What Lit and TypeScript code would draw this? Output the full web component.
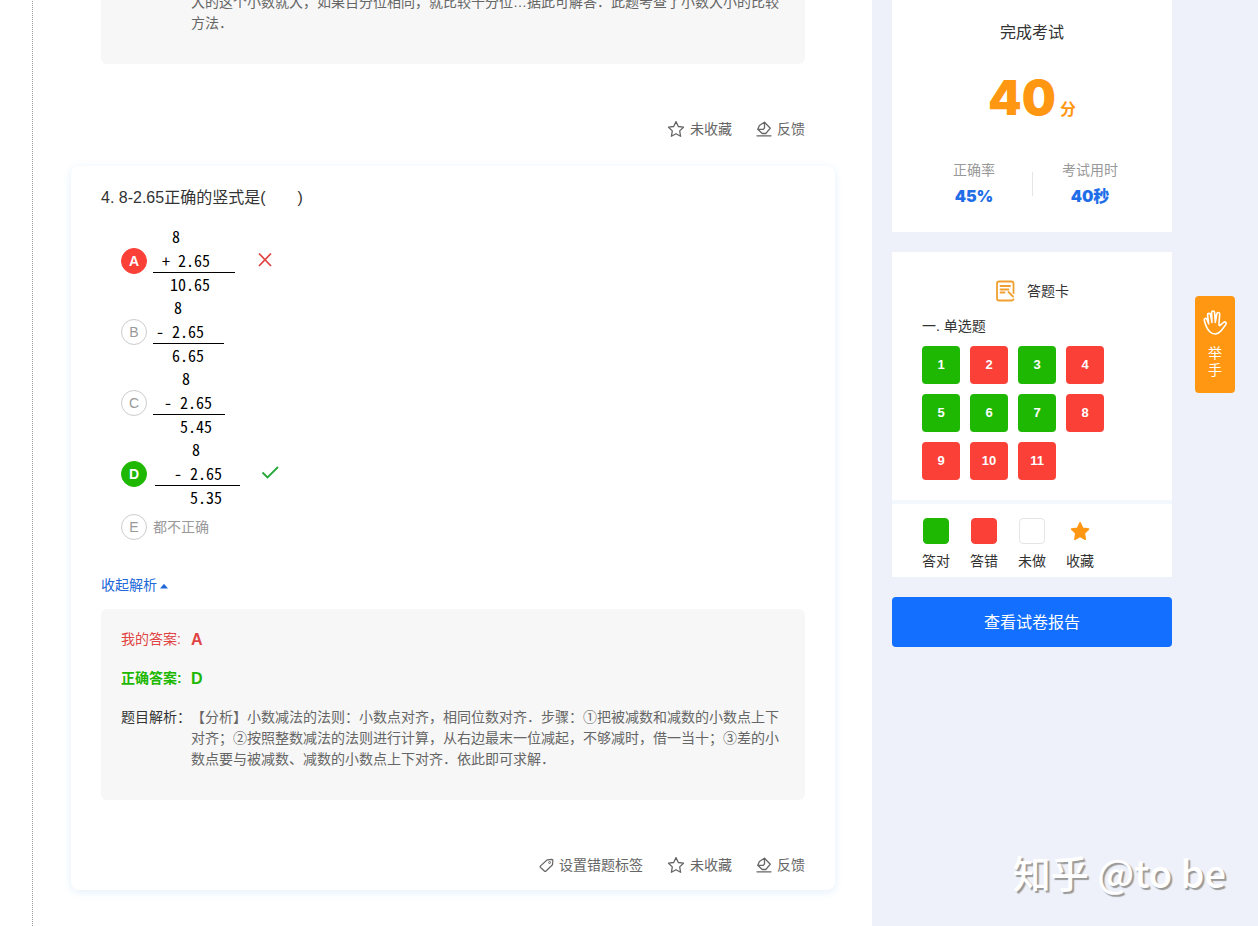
import { LitElement, html, css, svg, nothing } from "lit";
import { customElement, property, state } from "lit/decorators.js";
import { classMap } from "lit/directives/class-map.js";
import { styleMap } from "lit/directives/style-map.js";

interface Sum {
  lead: number;
  width: number;
  topRight: number;
  right: number;
  top: string;
  middle: string;
  result: string;
}

interface Option {
  key: string;
  state?: "wrong" | "right";
  sum?: Sum;
  text?: string;
}

const OPTIONS: Option[] = [
  { key: "A", state: "wrong", sum: { lead: 0, width: 82, topRight: 55, right: 25, top: "8", middle: "+ 2.65", result: "10.65" } },
  { key: "B", sum: { lead: 0, width: 71, topRight: 42, right: 20, top: "8", middle: "- 2.65", result: "6.65" } },
  { key: "C", sum: { lead: 0, width: 72, topRight: 35, right: 13, top: "8", middle: "- 2.65", result: "5.45" } },
  { key: "D", state: "right", sum: { lead: 2, width: 85, topRight: 40, right: 18, top: "8", middle: "- 2.65", result: "5.35" } },
  { key: "E", text: "都不正确" },
];

const RESULTS = [true, false, true, false, true, true, true, false, false, false, false];

const STAR = "M9 1.6l2.3 4.9 5.2.7-3.8 3.7.9 5.4L9 13.7l-4.6 2.6.9-5.4L1.5 7.2l5.2-.7z";

const starIcon = html`<svg class="icon" viewBox="0 0 18 18" width="18" height="18" aria-hidden="true">
  ${svg`<path d=${STAR} fill="none" stroke="currentColor" stroke-width="1.3" stroke-linejoin="round"/>`}
</svg>`;

const feedbackIcon = html`<svg class="icon" viewBox="0 0 16 16" width="16" height="16" aria-hidden="true">
  <g fill="none" stroke="currentColor" stroke-width="1.3" stroke-linejoin="round" stroke-linecap="round">
    <path d="M8.500 1.200l5.800 6-4.500 5.300H6.200L1.800 8.300l1.600-3.800z" />
    <path d="M8.500 1.400V6.800L7.300 8.300l-5.300 0" />
    <path d="M1 14.800h14" />
  </g>
</svg>`;

const tagIcon = html`<svg class="icon" viewBox="0 0 15 15" width="15" height="15" aria-hidden="true">
  <path d="M8.300 1.800l4.600-.4q1 0 1 1l-.4 4.300-6.700 6.500q-.6.500-1.200 0L1.300 9.300q-.5-.6 0-1.200z" fill="none" stroke="currentColor" stroke-width="1.200" stroke-linejoin="round" />
  <circle cx="10.600" cy="4.500" r="1" fill="none" stroke="currentColor" />
</svg>`;

const FONT = css`"Liberation Sans", Arial, "Noto Sans CJK SC", sans-serif`;

@customElement("question-actions")
class QuestionActions extends LitElement {
  @property({ type: Boolean }) tag = false;

  static styles = css`
    :host {
      display: flex;
      justify-content: flex-end;
      gap: 24px;
      padding: 55px 0 15px;
    }
    button {
      display: flex;
      align-items: center;
      gap: 5px;
      height: 20px;
      padding: 0;
      border: 0;
      background: none;
      color: #666;
      font: 14px/20px ${FONT};
      cursor: pointer;
    }
  `;

  render() {
    return html`
      ${this.tag ? html`<button type="button">${tagIcon}设置错题标签</button>` : nothing}
      <button type="button">${starIcon}未收藏</button>
      <button type="button">${feedbackIcon}反馈</button>
    `;
  }
}

@customElement("answer-option")
class AnswerOption extends LitElement {
  @property({ attribute: false }) option!: Option;

  static styles = css`
    :host {
      display: flex;
      align-items: center;
      gap: 6px;
      min-height: 36px;
      color: #999;
      font-size: 14px;
    }
    .letter {
      box-sizing: border-box;
      width: 26px;
      height: 26px;
      border: 1px solid #ccc;
      border-radius: 50%;
      line-height: 24px;
      text-align: center;
    }
    .wrong {
      border-color: #fb4038;
      background: #fb4038;
      color: #fff;
      font-weight: bold;
    }
    .right {
      border-color: #1eb803;
      background: #1eb803;
      color: #fff;
      font-weight: bold;
    }
    .sum {
      color: #000;
      font: 16px/22px "Noto Sans Mono CJK SC", "Liberation Mono", monospace;
      text-align: right;
      white-space: nowrap;
    }
    .row {
      box-sizing: border-box;
      height: 24px;
    }
    .middle {
      border-bottom: 1px solid #000;
    }
    .result {
      height: 23px;
    }
    .mark {
      margin-left: 14px;
    }
  `;

  private renderSum(s: Sum) {
    const pad = { paddingRight: `${s.right}px` };
    return html`<div class="sum" style=${styleMap({ width: `${s.width}px`, marginLeft: `${s.lead}px` })}>
      <div class="row" style=${styleMap({ paddingRight: `${s.topRight}px` })}>${s.top}</div>
      <div class="row middle" style=${styleMap(pad)}>${s.middle}</div>
      <div class="row result" style=${styleMap(pad)}>${s.result}</div>
    </div>`;
  }

  render() {
    const o = this.option;
    return html`
      <span class=${classMap({ letter: true, wrong: o.state === "wrong", right: o.state === "right" })}>${o.key}</span>
      ${o.sum ? this.renderSum(o.sum) : html`<span>${o.text}</span>`}
      ${o.state === "wrong"
        ? html`<svg class="mark" viewBox="0 0 20 20" width="20" height="20" role="img" aria-label="错误">
            <path d="M4 2.500l12 12.500M16 2.500L4 15" stroke="#e04444" stroke-width="1.800" fill="none" />
          </svg>`
        : nothing}
      ${o.state === "right"
        ? html`<svg class="mark" viewBox="0 0 20 20" width="20" height="20" role="img" aria-label="正确">
            <path d="M2.500 8.500l5 5L18 3" stroke="#26a83a" stroke-width="1.800" fill="none" />
          </svg>`
        : nothing}
    `;
  }
}

@customElement("app-root")
class AppRoot extends LitElement {
  @state() private open = true;

  static styles = css`
    :host {
      display: block;
      position: relative;
      min-height: 100vh;
      overflow: hidden;
      background: #eef1f9;
      color: #333;
      font: 14px/21px ${FONT};
      text-spacing-trim: space-all;
    }
    .page {
      display: flex;
      min-height: 100vh;
    }
    main {
      flex: 1;
      min-width: 0;
      padding-left: 32px;
      background: #fff;
    }
    .paper {
      box-sizing: border-box;
      min-height: 100%;
      padding: 0 37px 36px 38px;
      border-left: 1px dotted #999;
    }
    .question {
      padding: 20px 30px 0;
      border-radius: 8px;
    }
    .previous {
      margin: -48px 0 12px;
    }
    .current {
      box-shadow: 0 2px 8px rgba(60, 150, 230, 0.14);
    }
    h2 {
      margin: 0;
      font-size: 16px;
      font-weight: normal;
      line-height: 24px;
    }
    .options {
      margin: 0;
      padding: 15px 20px 0;
      list-style: none;
    }
    .toggle {
      display: flex;
      align-items: center;
      gap: 2px;
      margin: 30px 0 13px;
      padding: 0;
      border: 0;
      background: none;
      color: #2068d8;
      font: 14px/21px ${FONT};
      cursor: pointer;
    }
    .analysis {
      display: grid;
      grid-template-columns: 70px 1fr;
      row-gap: 18px;
      margin: 0;
      padding: 20px 20px 30px;
      border-radius: 6px;
      background: #f7f7f7;
    }
    dt,
    dd {
      margin: 0;
    }
    dt {
      white-space: nowrap;
    }
    dd {
      color: #666;
    }
    .mine {
      color: #e04444;
    }
    .correct {
      color: #1eb803;
      font-weight: bold;
    }
    .key {
      font-size: 16px;
      font-weight: bold;
    }
    aside {
      flex: none;
      width: 280px;
      padding: 0 86px 0 20px;
    }
    .card {
      margin-bottom: 20px;
      background: #fff;
    }
    .score {
      padding: 21px 24px 22px;
      text-align: center;
    }
    .points {
      display: flex;
      align-items: baseline;
      justify-content: center;
      gap: 4px;
      margin: 23px 0 30px;
      color: #ff9712;
      font-size: 16px;
      font-weight: bold;
      line-height: 24px;
    }
    .number {
      font: 900 48px/60px Inter, "Liberation Sans", sans-serif;
    }
    .stats {
      display: grid;
      grid-template-columns: 1fr 1fr;
      margin: 0;
      line-height: 24px;
    }
    .stats dt {
      color: #999;
    }
    .stats dd {
      color: #1f6ee8;
      font: 900 16px/28px Inter, "Noto Sans CJK SC", sans-serif;
    }
    .stat + .stat {
      background: linear-gradient(#e5e5e5, #e5e5e5) 0 14px / 1px 24px no-repeat;
    }
    .sheet {
      padding: 28px 30px 20px;
    }
    .sheet h3 {
      display: flex;
      align-items: center;
      justify-content: center;
      gap: 12px;
      margin: 0 0 14px;
      font-size: 14px;
      font-weight: normal;
    }
    .sheet h4 {
      margin: 0 0 10px;
      font-size: 14px;
      font-weight: normal;
      line-height: 20px;
    }
    .tiles {
      display: flex;
      flex-wrap: wrap;
      gap: 10px;
    }
    .tile {
      width: 38px;
      height: 38px;
      padding: 0;
      border: 0;
      border-radius: 4px;
      background: #fb4038;
      color: #fff;
      font: bold 13px/38px ${FONT};
      cursor: pointer;
    }
    .tile.ok {
      background: #1eb803;
    }
    .legend {
      display: flex;
      gap: 20px;
      margin: 0;
      padding: 14px 30px 5px;
      border-top: 4px solid #f2f8fd;
      list-style: none;
    }
    .legend li {
      display: flex;
      flex-direction: column;
      align-items: center;
      gap: 7px;
    }
    .swatch {
      box-sizing: border-box;
      width: 26px;
      height: 26px;
      border: 1px solid #e5e5e5;
      border-radius: 4px;
    }
    .swatch.ok {
      border-color: #1eb803;
      background: #1eb803;
    }
    .swatch.bad {
      border-color: #fb4038;
      background: #fb4038;
    }
    .report {
      width: 100%;
      height: 50px;
      border: 0;
      border-radius: 4px;
      background: #126fff;
      color: #fff;
      font: 16px/50px ${FONT};
      cursor: pointer;
    }
    .raise {
      position: absolute;
      top: 296px;
      right: 23px;
      display: flex;
      flex-direction: column;
      align-items: center;
      gap: 8px;
      width: 40px;
      padding: 13px 12px 14px;
      border: 0;
      border-radius: 4px;
      background: #ff9712;
      color: #fff;
      font: 14px/17px ${FONT};
      cursor: pointer;
    }
    .watermark {
      position: absolute;
      right: 32px;
      bottom: 28px;
      color: #fff;
      font: 500 38px/52px "Noto Sans CJK SC", sans-serif;
      text-shadow: 2px 2px 1px #999;
    }
  `;

  render() {
    return html`
      <div class="page">
        <main>
          <div class="paper">
            <section class="question previous">
              <dl class="analysis">
                <dt></dt>
                <dd>大的这个小数就大，如果百分位相同，就比较十分位…据此可解答．此题考查了小数大小的比较方法．</dd>
              </dl>
              <question-actions></question-actions>
            </section>

            <section class="question current">
              <h2>4. 8-2.65正确的竖式是(　　)</h2>
              <ol class="options">
                ${OPTIONS.map((o) => html`<li><answer-option .option=${o}></answer-option></li>`)}
              </ol>
              <button class="toggle" type="button" aria-expanded=${this.open} @click=${() => (this.open = !this.open)}>
                收起解析
                <svg viewBox="0 0 10 6" width="10" height="6" aria-hidden="true"><path d="M1 5.500L5 .8l4 4.700z" fill="currentColor" /></svg>
              </button>
              ${this.open
                ? html`<dl class="analysis">
                    <dt class="mine">我的答案:</dt>
                    <dd class="mine key">A</dd>
                    <dt class="correct">正确答案:</dt>
                    <dd class="correct key">D</dd>
                    <dt>题目解析：</dt>
                    <dd>【分析】小数减法的法则：小数点对齐，相同位数对齐．步骤：①把被减数和减数的小数点上下对齐；②按照整数减法的法则进行计算，从右边最末一位减起，不够减时，借一当十；③差的小数点要与被减数、减数的小数点上下对齐．依此即可求解．</dd>
                  </dl>`
                : nothing}
              <question-actions tag></question-actions>
            </section>
          </div>
        </main>

        <aside>
          <section class="card score">
            <h2>完成考试</h2>
            <div class="points"><span class="number">40</span>分</div>
            <dl class="stats">
              <div class="stat"><dt>正确率</dt><dd>45%</dd></div>
              <div class="stat"><dt>考试用时</dt><dd>40秒</dd></div>
            </dl>
          </section>

          <section class="card">
            <div class="sheet">
              <h3>
                <svg viewBox="0 0 20 22" width="20" height="22" aria-hidden="true">
                  <g fill="none" stroke="#f0a030" stroke-width="1.800" stroke-linecap="round" stroke-linejoin="round">
                    <path d="M18.500 13V3.500q0-2-2-2H4q-2 0-2 2v15q0 2 2 2h12.500q1.500 0 2-1.200" />
                    <path d="M5.500 6h9.500M5.500 9.500h8M5.500 12.500h4M13.500 12l4.500 4.500" />
                  </g>
                </svg>
                答题卡
              </h3>
              <h4>一. 单选题</h4>
              <div class="tiles">
                ${RESULTS.map((ok, i) => html`<button type="button" class=${classMap({ tile: true, ok })}>${i + 1}</button>`)}
              </div>
            </div>
            <ul class="legend">
              <li><span class="swatch ok"></span>答对</li>
              <li><span class="swatch bad"></span>答错</li>
              <li><span class="swatch"></span>未做</li>
              <li>
                <svg viewBox="-4 -4 26 26" width="26" height="26" aria-hidden="true">
                  <path d=${STAR} transform="translate(-1 -1) scale(1.120)" fill="#ff9712" stroke="#ff9712" stroke-width="1.500" stroke-linejoin="round" />
                </svg>
                收藏
              </li>
            </ul>
          </section>

          <button class="report" type="button">查看试卷报告</button>
        </aside>
      </div>

      <button class="raise" type="button">
        <svg viewBox="0 0 26 28" width="26" height="28" aria-hidden="true">
          <path
            d="M7.500 22.500C5 20 3.500 16 2.300 11.500c-.6-2.300 2-3 2.800-.9l1.600 4.200L5.600 6.300c-.3-2.300 2.400-2.700 2.900-.4l1.500 7.600-.4-9.700c0-2.200 2.900-2.200 3.100 0l.6 9.600L14.800 5c.3-2.200 3-1.900 2.900.4l-.8 10.300c.2.900.8 1.100 1.500.5l3-2.700c1.700-1.400 3.700.2 2.400 2-1.800 2.300-3.200 4.600-5 6.600-2.700 3.500-7.800 3.900-11.300.4z"
            fill="none" stroke="#fff" stroke-width="1.600" stroke-linejoin="round" stroke-linecap="round" />
        </svg>
        <span>举<br />手</span>
      </button>
      <div class="watermark">知乎 @to be</div>
    `;
  }
}
